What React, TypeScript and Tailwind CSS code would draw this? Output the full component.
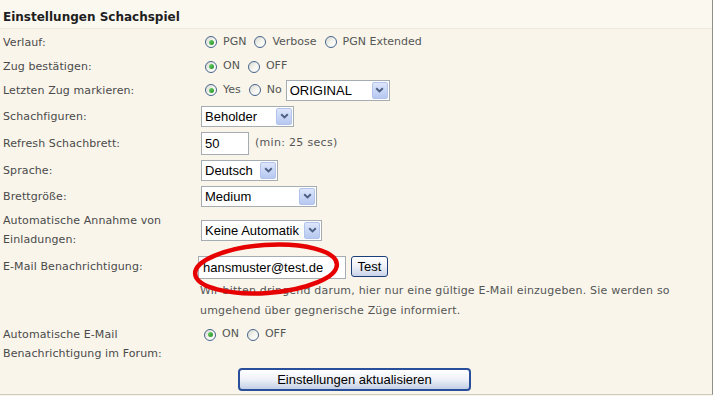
import React from 'react';

const verdana = "font-['DejaVu_Sans',Verdana,sans-serif]";
const arial = "font-['Liberation_Sans',Arial,sans-serif]";

function Radio({ checked }: { checked?: boolean }) {
  return (
    <span className="inline-flex h-[12px] w-[12px] shrink-0 items-center justify-center rounded-full border border-[#47648c] bg-gradient-to-br from-[#d8d8d0] via-[#f4f4ef] to-white">
      {checked && <span className="h-[5px] w-[5px] rounded-full bg-gradient-to-br from-[#6fd36f] to-[#1f8f1f]" />}
    </span>
  );
}

function RadioOpt({ label, checked }: { label: string; checked?: boolean }) {
  return (
    <span className="flex items-center gap-[6px]">
      <Radio checked={checked} />
      <span className={`${verdana} text-[11px] text-[#555]`}>{label}</span>
    </span>
  );
}

function Arrow() {
  return (
    <span className="ml-auto mr-[1px] flex h-[17px] w-[16px] items-center justify-center rounded-[2px] border border-[#b2c4ec] bg-gradient-to-b from-[#dde6fb] to-[#b6c8f0]">
      <svg width="9" height="6" viewBox="0 0 9 6">
        <path d="M1.2 1.2 L4.5 4.4 L7.8 1.2" fill="none" stroke="#4d6185" strokeWidth="2" />
      </svg>
    </span>
  );
}

function Select({ value, cls }: { value: string; cls: string }) {
  return (
    <div className={`flex h-[21px] items-center border border-[#a5acb2] bg-white ${cls}`}>
      <span className={`${arial} pl-[3px] text-[13px] leading-none text-black`}>{value}</span>
      <Arrow />
    </div>
  );
}

function Label({ children }: { children: React.ReactNode }) {
  return <div className={`${verdana} w-[200px] shrink-0 pl-[3px] text-[11px] leading-[19px] tracking-[0.1px] text-[#4a4a4a]`}>{children}</div>;
}

export default function App() {
  return (
    <div className="relative h-[396px] w-[713px] overflow-hidden bg-[#f9f5eb]">
      <div className="h-[395px] w-[713px] border-b border-r border-b-[#cfcbc0] border-r-[#8f8f88]">
        <div className="flex h-[29px] items-center border-b border-[#efe9da] bg-[#fbf8f0] pl-[3px] pt-[5px]">
          <span className={`${verdana} text-[12px] font-bold text-[#1e1e1e]`}>Einstellungen Schachspiel</span>
        </div>

        <div className="flex h-[26px] items-center">
          <Label>Verlauf:</Label>
          <div className="flex items-center gap-[8px] pl-[5px]">
            <RadioOpt label="PGN" checked />
            <RadioOpt label="Verbose" />
            <RadioOpt label="PGN Extended" />
          </div>
        </div>

        <div className="flex h-[23px] items-center">
          <Label>Zug bestätigen:</Label>
          <div className="flex items-center gap-[8px] pl-[5px]">
            <RadioOpt label="ON" checked />
            <RadioOpt label="OFF" />
          </div>
        </div>

        <div className="flex h-[24px] items-center">
          <Label>Letzten Zug markieren:</Label>
          <div className="flex items-center gap-[8px] pl-[5px]">
            <RadioOpt label="Yes" checked />
            <RadioOpt label="No" />
          </div>
          <Select value="ORIGINAL" cls="ml-[4px] w-[104px]" />
        </div>

        <div className="flex h-[28px] items-center">
          <Label>Schachfiguren:</Label>
          <Select value="Beholder" cls="ml-[1px] w-[93px]" />
        </div>

        <div className="flex h-[27px] items-center">
          <Label>Refresh Schachbrett:</Label>
          <div className={`${arial} ml-[1px] flex h-[23px] w-[48px] items-center border border-[#a5acb2] bg-white pl-[3px] text-[13px] text-black`}>50</div>
          <span className={`${verdana} ml-[6px] text-[11px] tracking-[0.3px] text-[#555]`}>(min: 25 secs)</span>
        </div>

        <div className="flex h-[26px] items-center">
          <Label>Sprache:</Label>
          <Select value="Deutsch" cls="ml-[1px] w-[77px]" />
        </div>

        <div className="flex h-[26px] items-center">
          <Label>Brettgröße:</Label>
          <Select value="Medium" cls="ml-[1px] w-[116px]" />
        </div>

        <div className="flex h-[42px] items-center">
          <Label>
            Automatische Annahme von
            <br />
            Einladungen:
          </Label>
          <Select value="Keine Automatik" cls="ml-[1px] w-[121px]" />
        </div>

        <div className="flex h-[30px] items-center">
          <Label>E-Mail Benachrichtigung:</Label>
          <div className={`${arial} ml-[-2px] mt-[3px] flex h-[23px] w-[148px] items-center border border-[#a5acb2] bg-white pl-[4px] text-[13px] text-black`}>
            hansmuster@test.de
          </div>
          <button className={`${arial} ml-[5px] h-[21px] w-[37px] rounded-[3px] border border-[#1c3f7a] bg-gradient-to-b from-white via-[#eef0f6] to-[#c9d3e8] text-[13px] leading-none text-black`}>
            Test
          </button>
        </div>

        <div className={`${verdana} h-[40px] pl-[200px] text-[11px] leading-[20px] tracking-[0.2px] text-[#555]`}>
          Wir bitten dringend darum, hier nur eine gültige E-Mail einzugeben. Sie werden so
          <br />
          umgehend über gegnerische Züge informiert.
        </div>

        <div className="flex items-start pt-[4px]">
          <Label>
            Automatische E-Mail
            <br />
            Benachrichtigung im Forum:
          </Label>
          <div className="flex h-[19px] items-center gap-[8px] pl-[4px]">
            <RadioOpt label="ON" checked />
            <RadioOpt label="OFF" />
          </div>
        </div>

        <div className="mt-[5px] flex pl-[238px]">
          <button className={`${arial} h-[23px] w-[233px] rounded-[4px] border-2 border-[#2a4f9a] bg-gradient-to-b from-white via-[#eef1f8] to-[#c3cfe6] text-[13px] leading-none text-black`}>
            Einstellungen aktualisieren
          </button>
        </div>
      </div>

      <svg className="pointer-events-none absolute left-[184px] top-[238px]" width="164" height="64" viewBox="0 0 164 64">
        <ellipse cx="82" cy="31" rx="71" ry="24" fill="none" stroke="#e60000" strokeWidth="4.5" transform="rotate(-4 82 31)" />
      </svg>
    </div>
  );
}
